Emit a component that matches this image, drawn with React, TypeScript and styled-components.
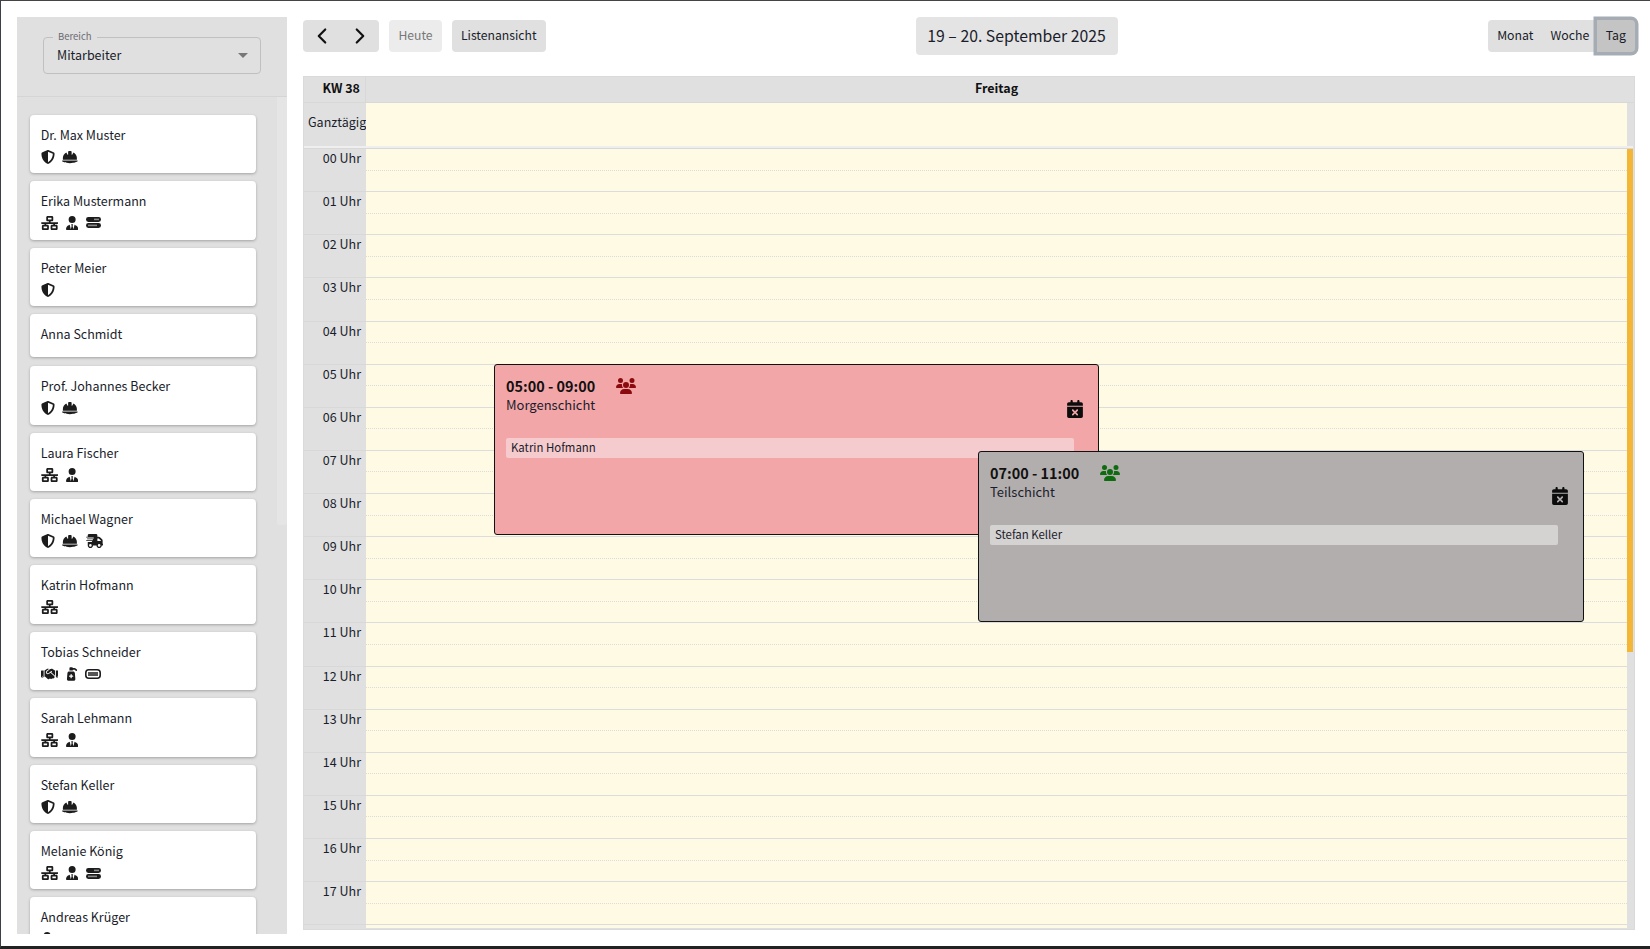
import React from "react";
import styled, { createGlobalStyle } from "styled-components";
import {
  FaShieldHalved,
  FaHelmetSafety,
  FaNetworkWired,
  FaUserTie,
  FaTruckFast,
  FaHandshake,
  FaPumpMedical,
  FaUsers,
  FaCalendarXmark,
} from "react-icons/fa6";
import { ChevronLeft, ChevronRight } from "lucide-react";

const Global = createGlobalStyle`
  html, body { margin: 0; padding: 0; background: #fff; }
  body {
    font-family: "Noto Sans CJK SC", "Liberation Sans", sans-serif;
    font-size: 12.5px;
    color: #1a1d2b;
  }
  * { box-sizing: border-box; }
`;

const Page = styled.div`
  width: 1650px;
  height: 949px;
  overflow: hidden;
  display: flex;
  gap: 16px;
  padding: 16px 15px 0 16px;
  border-top: 1px solid #444;
  border-left: 1px solid #3c3f46;
  border-bottom: 3px solid #222;
`;

const Sidebar = styled.aside`
  width: 270px;
  height: 917px;
  flex: none;
  background: #e0e0e0;
  display: flex;
  flex-direction: column;
  overflow: hidden;
`;

const SidebarHead = styled.div`
  height: 80px;
  flex: none;
  padding: 20px 26px;
  border-bottom: 1px solid #d5d5d5;
`;

const SelectBox = styled.div`
  position: relative;
  width: 218px;
  height: 37px;
  border: 1px solid #c0c0c0;
  border-radius: 4px;
  display: flex;
  align-items: center;
  padding: 0 12px 2px 13px;
  justify-content: space-between;
  font-size: 12.5px;
`;

const SelectLabel = styled.span`
  position: absolute;
  left: 9px;
  top: -8px;
  padding: 0 5px;
  font-size: 9.5px;
  line-height: 12px;
  color: #6a6a72;
  background: #e0e0e0;
`;

const Caret = styled.span`
  width: 0;
  height: 0;
  margin-top: 2px;
  border-left: 5px solid transparent;
  border-right: 5px solid transparent;
  border-top: 5px solid #777;
`;

const SidebarBody = styled.div`
  flex: 1;
  min-height: 0;
  display: flex;
  justify-content: space-between;
`;

const CardList = styled.div`
  width: 226px;
  margin-left: 13px;
  padding-top: 18px;
  display: flex;
  flex-direction: column;
  gap: 8.25px;
`;

const ScrollTrack = styled.div`
  width: 10px;
  height: 428px;
  background: #e5e5e5;
  border-radius: 0 0 3px 3px;
`;

const Card = styled.div<{ $h: number }>`
  flex: none;
  height: ${(p) => p.$h}px;
  background: #fff;
  border-radius: 4px;
  box-shadow: 0 1px 3px rgba(0, 0, 0, 0.28);
  padding: 9px 10.7px 0;
`;

const CardName = styled.div`
  font-size: 12.5px;
  line-height: 21px;
`;

const IconRow = styled.div`
  display: flex;
  align-items: center;
  gap: 7.6px;
  height: 19px;
  margin-top: 2.7px;
  color: #1c1c1c;
`;

const IconBox = styled.span<{ $w: number }>`
  display: flex;
  flex: none;
  align-items: center;
  justify-content: center;
  width: ${(p) => p.$w}px;
  & > svg {
    width: ${(p) => p.$w}px;
    height: 14px;
  }
`;

const DrawnIcon = styled.span`
  display: flex;
  flex: none;
`;

const Main = styled.main`
  flex: 1;
  min-width: 0;
  display: flex;
  flex-direction: column;
`;

const Toolbar = styled.div`
  height: 38px;
  display: flex;
  align-items: center;
  justify-content: space-between;
  flex: none;
`;

const ToolGroup = styled.div`
  display: flex;
  gap: 10.4px;
`;

const Segmented = styled.div`
  display: flex;
  height: 32px;
  background: #e0e0e0;
  border-radius: 4px;
`;

const NavButton = styled.button`
  width: 38px;
  border: 0;
  background: none;
  padding: 0;
  display: flex;
  align-items: center;
  justify-content: center;
  color: #111;
`;

const ToolButton = styled.button<{ $disabled?: boolean }>`
  height: 32px;
  padding: 0 9px 2px;
  border: 0;
  border-radius: 4px;
  font: inherit;
  font-size: 12.2px;
  background: ${(p) => (p.$disabled ? "#ececec" : "#e0e0e0")};
  color: ${(p) => (p.$disabled ? "#777" : "#1a1d2b")};
`;

const Title = styled.div`
  width: 202px;
  height: 38px;
  padding-bottom: 2px;
  background: #e4e4e4;
  border-radius: 4px;
  display: flex;
  align-items: center;
  justify-content: center;
  font-size: 15.8px;
  white-space: nowrap;
`;

const ViewButton = styled.button<{ $active?: boolean }>`
  height: 32px;
  padding: ${(p) => (p.$active ? "0 9px 2px" : "0 7.5px 2px 9.5px")};
  border: 0;
  font: inherit;
  font-size: 12.3px;
  color: #1a1d2b;
  background: ${(p) => (p.$active ? "#c4c4c4" : "transparent")};
  border-radius: ${(p) => (p.$active ? "0 4px 4px 0" : "0")};
  box-shadow: ${(p) => (p.$active ? "0 0 0 3.5px #a5acb4" : "none")};
`;

const Calendar = styled.section`
  margin-top: 21px;
  height: 854px;
  background: #e0e0e0;
  border: 1px solid #dadada;
  display: flex;
  flex-direction: column;
  overflow: hidden;
`;

const HeadRow = styled.div`
  height: 26px;
  flex: none;
  display: flex;
  font-weight: 700;
  line-height: 21px;
  color: #111;
  border-bottom: 1px solid #d8d8d8;
`;

const HeadWeek = styled.div`
  width: 62px;
  flex: none;
  text-align: right;
  padding-right: 5px;
  border-right: 1px solid #d8d8d8;
`;

const HeadDay = styled.div`
  flex: 1;
  text-align: center;
  padding-right: 7px;
`;

const AllDayRow = styled.div`
  height: 43px;
  flex: none;
  display: flex;
`;

const AllDayLabel = styled.div`
  width: 62px;
  flex: none;
  padding-left: 4px;
  line-height: 38px;
  white-space: nowrap;
`;

const AllDayCell = styled.div`
  flex: 1;
  margin-right: 7px;
  background: #fffae3;
`;

const Separator = styled.div`
  height: 3px;
  flex: none;
  margin-right: 1px;
  background: #efefef;
  border-bottom: 1px solid #d8d8d8;
`;

const Body = styled.div`
  flex: 1;
  min-height: 0;
  display: flex;
`;

const Scroller = styled.div`
  flex: 1;
  min-width: 0;
  position: relative;
  overflow: hidden;
  height: 779px;
`;

const HourRow = styled.div`
  height: 43.13px;
  display: flex;
`;

const TimeCell = styled.div`
  width: 62px;
  flex: none;
  text-align: right;
  padding-right: 5px;
  line-height: 17.5px;
  border-bottom: 1px solid #d8d8d8;
`;

const Slots = styled.div`
  flex: 1;
  background: #fffae3;
  display: flex;
  flex-direction: column;
`;

const Slot = styled.div<{ $solid?: boolean }>`
  flex: 1;
  border-bottom: 1px ${(p) => (p.$solid ? "solid" : "dotted")} #dcdcdc;
`;

const Gutter = styled.div`
  width: 7px;
  flex: none;
`;

const Thumb = styled.div`
  width: 6px;
  height: 503px;
  background: #f3b637;
`;

const Shift = styled.div<{ $left: number; $top: number; $w: number; $bg: string }>`
  position: absolute;
  left: ${(p) => p.$left}px;
  top: ${(p) => p.$top}px;
  width: ${(p) => p.$w}px;
  height: 171px;
  padding: 10.5px 11px 0;
  background: ${(p) => p.$bg};
  border: 1.5px solid #111;
  border-radius: 3px;
`;

const ShiftTop = styled.div`
  display: flex;
  align-items: center;
  gap: 20.5px;
  height: 20px;
`;

const ShiftTime = styled.div`
  font-size: 14.4px;
  font-weight: 700;
  color: #111;
`;

const ShiftTitle = styled.div`
  font-size: 13px;
  line-height: 18.5px;
`;

const ShiftIcon = styled.span<{ $color: string }>`
  display: flex;
  color: ${(p) => p.$color};
  font-size: 20px;
`;

const CancelIcon = styled.span`
  position: absolute;
  right: 14px;
  top: 35px;
  display: flex;
  color: #0c0c0c;
  font-size: 18px;
`;

const Assignee = styled.div<{ $bg: string }>`
  margin-top: 24px;
  width: 568px;
  height: 20px;
  padding-left: 5px;
  line-height: 19px;
  font-size: 11.4px;
  border-radius: 2px;
  background: ${(p) => p.$bg};
`;

const StackIcon = () => (
  <svg width="15" height="11" viewBox="0 0 15 11">
    <rect x="0" y="0" width="15" height="5" rx="2.4" fill="#1c1c1c" />
    <rect x="8" y="1.6" width="5" height="1.6" fill="#8a8a8a" />
    <rect x="0" y="6" width="15" height="5" rx="2.4" fill="#1c1c1c" />
    <rect x="2" y="7.6" width="9" height="1.6" fill="#8a8a8a" />
  </svg>
);

const BatteryIcon = () => (
  <svg width="16" height="10" viewBox="0 0 16 10">
    <rect x="0.8" y="0.8" width="14.4" height="8.4" rx="3" fill="none" stroke="#1c1c1c" strokeWidth="1.6" />
    <rect x="3" y="3" width="10" height="4" fill="#555" />
  </svg>
);

type IconKey = "shield" | "hat" | "net" | "tie" | "stack" | "truck" | "hand" | "pump" | "battery";

const icons: Record<IconKey, React.ReactNode> = {
  shield: (
    <IconBox $w={14}>
      <FaShieldHalved />
    </IconBox>
  ),
  hat: (
    <IconBox $w={15.75}>
      <FaHelmetSafety />
    </IconBox>
  ),
  net: (
    <IconBox $w={17.5}>
      <FaNetworkWired />
    </IconBox>
  ),
  tie: (
    <IconBox $w={12.25}>
      <FaUserTie />
    </IconBox>
  ),
  stack: (
    <DrawnIcon>
      <StackIcon />
    </DrawnIcon>
  ),
  truck: (
    <IconBox $w={17.5}>
      <FaTruckFast />
    </IconBox>
  ),
  hand: (
    <IconBox $w={17.5}>
      <FaHandshake />
    </IconBox>
  ),
  pump: (
    <IconBox $w={12}>
      <FaPumpMedical />
    </IconBox>
  ),
  battery: (
    <DrawnIcon>
      <BatteryIcon />
    </DrawnIcon>
  ),
};

const people: { name: string; h: number; icons: IconKey[] }[] = [
  { name: "Dr. Max Muster", h: 57.5, icons: ["shield", "hat"] },
  { name: "Erika Mustermann", h: 58.8, icons: ["net", "tie", "stack"] },
  { name: "Peter Meier", h: 58, icons: ["shield"] },
  { name: "Anna Schmidt", h: 43.3, icons: [] },
  { name: "Prof. Johannes Becker", h: 59, icons: ["shield", "hat"] },
  { name: "Laura Fischer", h: 57.7, icons: ["net", "tie"] },
  { name: "Michael Wagner", h: 58, icons: ["shield", "hat", "truck"] },
  { name: "Katrin Hofmann", h: 58.9, icons: ["net"] },
  { name: "Tobias Schneider", h: 57.5, icons: ["hand", "pump", "battery"] },
  { name: "Sarah Lehmann", h: 59, icons: ["net", "tie"] },
  { name: "Stefan Keller", h: 57.5, icons: ["shield", "hat"] },
  { name: "Melanie König", h: 58, icons: ["net", "tie", "stack"] },
  { name: "Andreas Krüger", h: 58, icons: ["tie"] },
];

const hours = Array.from({ length: 19 }, (_, i) => `${String(i).padStart(2, "0")} Uhr`);

export default function App() {
  return (
    <>
      <Global />
      <Page>
        <Sidebar>
          <SidebarHead>
            <SelectBox>
              <SelectLabel>Bereich</SelectLabel>
              Mitarbeiter
              <Caret />
            </SelectBox>
          </SidebarHead>
          <SidebarBody>
            <CardList>
              {people.map((p) => (
                <Card key={p.name} $h={p.h}>
                  <CardName>{p.name}</CardName>
                  {p.icons.length > 0 && (
                    <IconRow>
                      {p.icons.map((k) => (
                        <React.Fragment key={k}>{icons[k]}</React.Fragment>
                      ))}
                    </IconRow>
                  )}
                </Card>
              ))}
            </CardList>
            <ScrollTrack />
          </SidebarBody>
        </Sidebar>
        <Main>
          <Toolbar>
            <ToolGroup>
              <Segmented>
                <NavButton>
                  <ChevronLeft size={26} strokeWidth={2} />
                </NavButton>
                <NavButton>
                  <ChevronRight size={26} strokeWidth={2} />
                </NavButton>
              </Segmented>
              <ToolButton $disabled>Heute</ToolButton>
              <ToolButton>Listenansicht</ToolButton>
            </ToolGroup>
            <Title>19 – 20. September 2025</Title>
            <Segmented>
              <ViewButton>Monat</ViewButton>
              <ViewButton>Woche</ViewButton>
              <ViewButton $active>Tag</ViewButton>
            </Segmented>
          </Toolbar>
          <Calendar>
            <HeadRow>
              <HeadWeek>KW 38</HeadWeek>
              <HeadDay>Freitag</HeadDay>
            </HeadRow>
            <AllDayRow>
              <AllDayLabel>Ganztägig</AllDayLabel>
              <AllDayCell />
            </AllDayRow>
            <Separator />
            <Body>
              <Scroller>
                {hours.map((h) => (
                  <HourRow key={h}>
                    <TimeCell>{h}</TimeCell>
                    <Slots>
                      <Slot />
                      <Slot $solid />
                    </Slots>
                  </HourRow>
                ))}
                <Shift $left={190} $top={215} $w={605} $bg="#f3a6a8">
                  <ShiftTop>
                    <ShiftTime>05:00 - 09:00</ShiftTime>
                    <ShiftIcon $color="#8b0a0f">
                      <FaUsers />
                    </ShiftIcon>
                  </ShiftTop>
                  <ShiftTitle>Morgenschicht</ShiftTitle>
                  <CancelIcon>
                    <FaCalendarXmark />
                  </CancelIcon>
                  <Assignee $bg="#f6cbce">Katrin Hofmann</Assignee>
                </Shift>
                <Shift $left={674} $top={302} $w={606} $bg="#b3aeae">
                  <ShiftTop>
                    <ShiftTime>07:00 - 11:00</ShiftTime>
                    <ShiftIcon $color="#0e6b10">
                      <FaUsers />
                    </ShiftIcon>
                  </ShiftTop>
                  <ShiftTitle>Teilschicht</ShiftTitle>
                  <CancelIcon>
                    <FaCalendarXmark />
                  </CancelIcon>
                  <Assignee $bg="#d5d2d2">Stefan Keller</Assignee>
                </Shift>
              </Scroller>
              <Gutter>
                <Thumb />
              </Gutter>
            </Body>
          </Calendar>
        </Main>
      </Page>
    </>
  );
}
